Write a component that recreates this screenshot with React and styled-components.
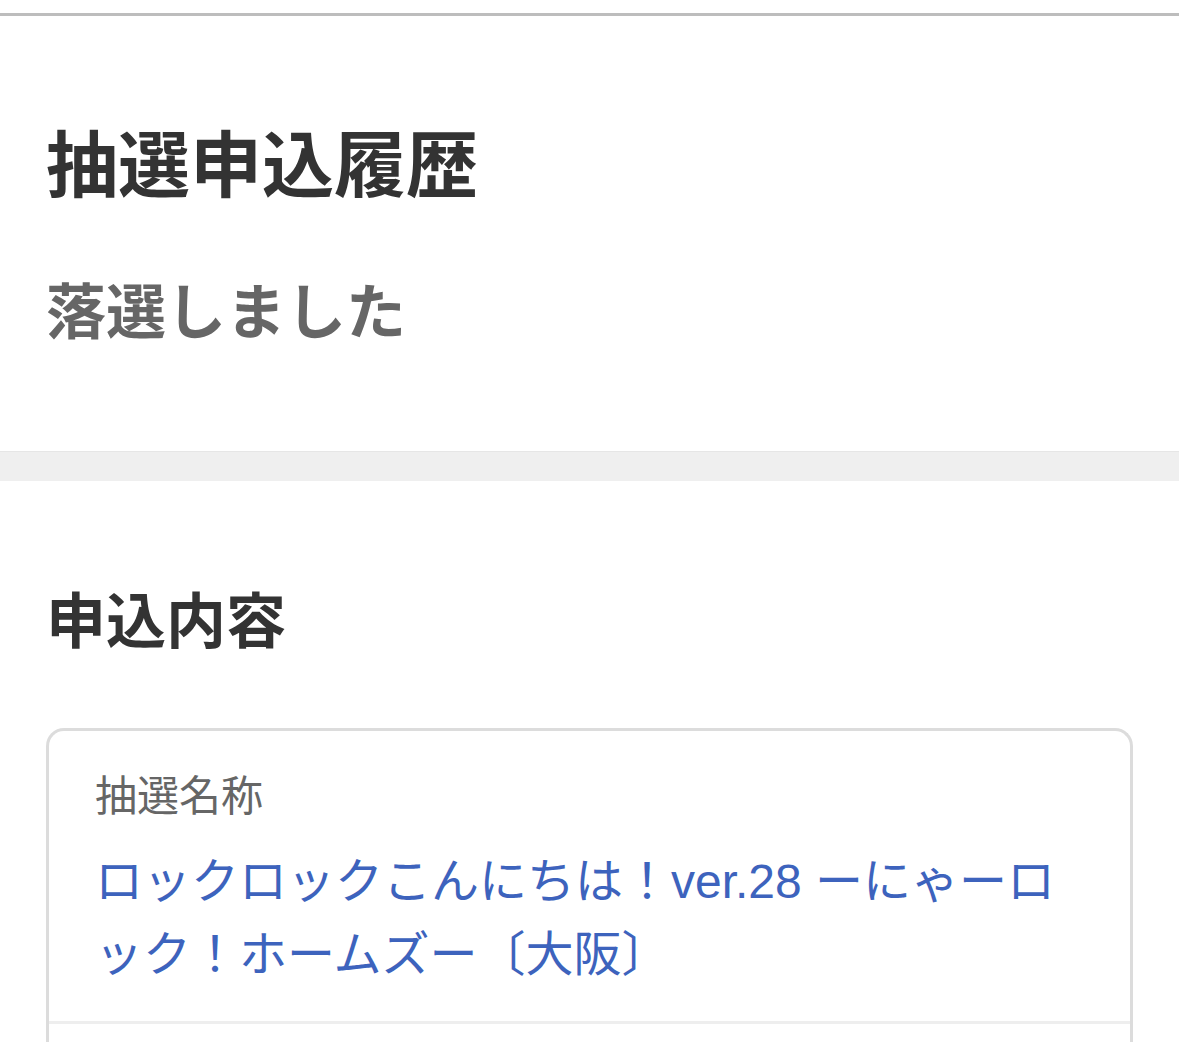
import React from 'react'
import styled, { createGlobalStyle } from 'styled-components'

const GlobalStyle = createGlobalStyle`
  html, body {
    margin: 0;
    padding: 0;
    background: #ffffff;
  }
  body {
    font-family: "Liberation Sans", "Noto Sans CJK JP", sans-serif;
  }
`

const Page = styled.div`
  width: 100%;
  padding-top: 13px;
  background: #fff;
`

const TopRule = styled.div`
  height: 3px;
  background: #bdbdbd;
`

const Section = styled.section`
  padding: ${p => p.$pad || '0 46px'};
`

const PageTitle = styled.h1`
  margin: 0;
  font-family: "Noto Sans CJK JP", sans-serif;
  font-size: 72px;
  line-height: 100px;
  font-weight: 700;
  color: #333333;
`

const Status = styled.p`
  margin: 58px 0 0;
  font-family: "Noto Sans CJK JP", sans-serif;
  font-size: 60px;
  line-height: 80px;
  font-weight: 700;
  color: #666666;
`

const Band = styled.div`
  height: 30px;
  background: #efefef;
  border-top: 1px solid #e6e6e6;
  box-sizing: border-box;
`

const SectionTitle = styled.h2`
  margin: 0 0 71px;
  font-family: "Noto Sans CJK JP", sans-serif;
  font-size: 60px;
  line-height: 80px;
  font-weight: 700;
  color: #333333;
`

const Card = styled.div`
  border: 3px solid #dcdcdc;
  border-bottom: none;
  border-radius: 18px 18px 0 0;
  overflow: hidden;
`

const Row = styled.div`
  padding: 32px 46px 30px;
  border-bottom: 3px solid #eeeeee;
  min-height: ${p => p.$min || 'auto'};
`

const Label = styled.div`
  font-family: "Noto Sans CJK JP", sans-serif;
  font-size: 42px;
  line-height: 60px;
  font-weight: 400;
  color: #666666;
`

const Link = styled.a`
  display: block;
  margin-top: 22px;
  font-size: 48px;
  line-height: 73px;
  color: #3d63bd;
  text-decoration: none;
  line-break: normal;
`

export default function App() {
  return (
    <Page>
      <GlobalStyle />
      <TopRule />
      <Section $pad="94px 46px 103px">
        <PageTitle>抽選申込履歴</PageTitle>
        <Status>落選しました</Status>
      </Section>
      <Band />
      <Section $pad="96px 46px 0">
        <SectionTitle>申込内容</SectionTitle>
        <Card>
          <Row>
            <Label>抽選名称</Label>
            <Link href="#">ロックロックこんにちは！ver.28 ーにゃーロック！ホームズー〔大阪〕</Link>
          </Row>
          <Row $min="160px" />
        </Card>
      </Section>
    </Page>
  )
}
